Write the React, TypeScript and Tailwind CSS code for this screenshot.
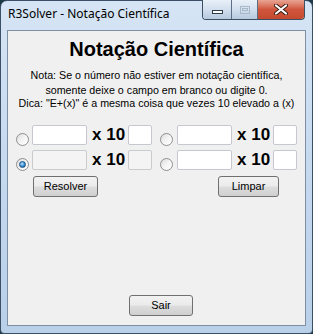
import React from 'react';

const ui = { fontFamily: '"Liberation Sans", Arial, sans-serif' };

function Radio({ checked = false }: { checked?: boolean }) {
  return (
    <div className="mt-[8px] w-[13px] h-[13px] shrink-0 rounded-full border border-[#8e8f8f] bg-gradient-to-br from-[#dcdcdc] via-[#f4f4f4] to-[#ffffff] flex items-center justify-center">
      {checked && (
        <div className="w-[7px] h-[7px] rounded-full border border-[#1d4f7e] bg-[radial-gradient(circle_at_40%_35%,#b6e3ff,#3c8fd6_55%,#0f4679)]" />
      )}
    </div>
  );
}

function Box({ w, disabled = false }: { w: string; disabled?: boolean }) {
  return (
    <div
      className={`${w} h-[20px] shrink-0 rounded-[2px] border ${
        disabled ? 'border-[#c9cbce] bg-[#f4f4f4]' : 'border-[#c5c8cf] bg-white'
      }`}
    />
  );
}

function Power({ disabled = false }: { disabled?: boolean }) {
  return (
    <>
      <Box w="w-[55px]" disabled={disabled} />
      <span className="ml-[5px] w-[36px] shrink-0 text-[17px] leading-[20px] font-bold text-black whitespace-nowrap">
        x 10
      </span>
      <Box w="w-[24px]" disabled={disabled} />
    </>
  );
}

function Btn({ label, w }: { label: string; w: string }) {
  return (
    <div
      className={`${w} h-[21px] rounded-[3px] border border-[#707070] bg-[linear-gradient(#f2f2f2_0%,#ebebeb_48%,#dddddd_52%,#cfcfcf_100%)] flex items-center justify-center text-[11px] text-black`}
    >
      {label}
    </div>
  );
}

export default function App() {
  return (
    <div className="w-[313px] h-[334px] bg-[#1c3945]" style={ui}>
      <div className="h-full rounded-t-[7px] rounded-b-[4px] border border-[#3b4f66] bg-gradient-to-b from-[#d6e5f5] via-[#c5d9ef] to-[#b9d0e9] flex flex-col px-[6px] pb-[7px]">
        <div className="h-[29px] flex items-start">
          <div
            className="pl-[1px] pt-[5px] text-[12px] leading-[16px] text-black whitespace-nowrap"
            style={{ fontFamily: '"Noto Sans", "Open Sans", sans-serif' }}
          >
            R3Solver - Notação Científica
          </div>
          <div className="ml-auto mr-[1px] -mt-[1px] h-[20px] flex rounded-b-[4px] border border-t-0 border-[#3d4f63] overflow-hidden">
            <div className="w-[29px] h-full bg-gradient-to-b from-[#e9f0f8] via-[#d2dfee] to-[#b7c9de] border-r border-[#5d6f84] flex items-center justify-center">
              <div className="mt-[5px] w-[11px] h-[4px] bg-white border border-[#2e3b49]" />
            </div>
            <div className="w-[26px] h-full bg-gradient-to-b from-[#e9f0f8] via-[#d2dfee] to-[#b7c9de] border-r border-[#5d6f84] flex items-center justify-center">
              <div className="w-[10px] h-[8px] border border-[#a9b8c9] flex items-center justify-center">
                <div className="w-[6px] h-[3px] border border-[#a9b8c9]" />
              </div>
            </div>
            <div className="w-[46px] h-full bg-gradient-to-b from-[#e8a493] via-[#d0553c] to-[#c44a2f] flex items-center justify-center">
              <svg width="14" height="11" viewBox="0 0 14 11">
                <path d="M2 1.5 L12 9.5 M12 1.5 L2 9.5" stroke="#3a1c14" strokeWidth="4" strokeLinecap="round" />
                <path d="M2 1.5 L12 9.5 M12 1.5 L2 9.5" stroke="#ffffff" strokeWidth="2.2" strokeLinecap="round" />
              </svg>
            </div>
          </div>
        </div>

        <div className="flex-1 border border-[#7f8fa3] bg-[#f0f0f0] flex flex-col">
          <div className="pt-[7px] text-center text-[20px] leading-[23px] font-bold text-black">
            Notação Científica
          </div>
          <div className="mt-[6px] text-center text-[10.7px] text-black">
            <div className="leading-[16px]">Nota: Se o número não estiver em notação científica,</div>
            <div className="leading-[14px]">somente deixe o campo em branco ou digite 0.</div>
            <div className="leading-[13px]">Dica: "E+(x)" é a mesma coisa que vezes 10 elevado a (x)</div>
          </div>

          <div className="mt-[15px] flex items-start pl-[8px]">
            <Radio />
            <div className="ml-[3px] flex items-start">
              <Power />
            </div>
            <div className="ml-[8px]">
              <Radio />
            </div>
            <div className="ml-[4px] flex items-start">
              <Power />
            </div>
          </div>
          <div className="mt-[4px] flex items-start pl-[8px]">
            <Radio checked />
            <div className="ml-[3px] flex items-start">
              <Power disabled />
            </div>
            <div className="ml-[8px]">
              <Radio />
            </div>
            <div className="ml-[4px] flex items-start">
              <Power />
            </div>
          </div>

          <div className="mt-[5px] flex pl-[25px]">
            <Btn label="Resolver" w="w-[65px]" />
            <div className="ml-[120px]">
              <Btn label="Limpar" w="w-[61px]" />
            </div>
          </div>

          <div className="mt-auto mb-[9px] pl-[121px]">
            <Btn label="Sair" w="w-[64px]" />
          </div>
        </div>
      </div>
    </div>
  );
}
